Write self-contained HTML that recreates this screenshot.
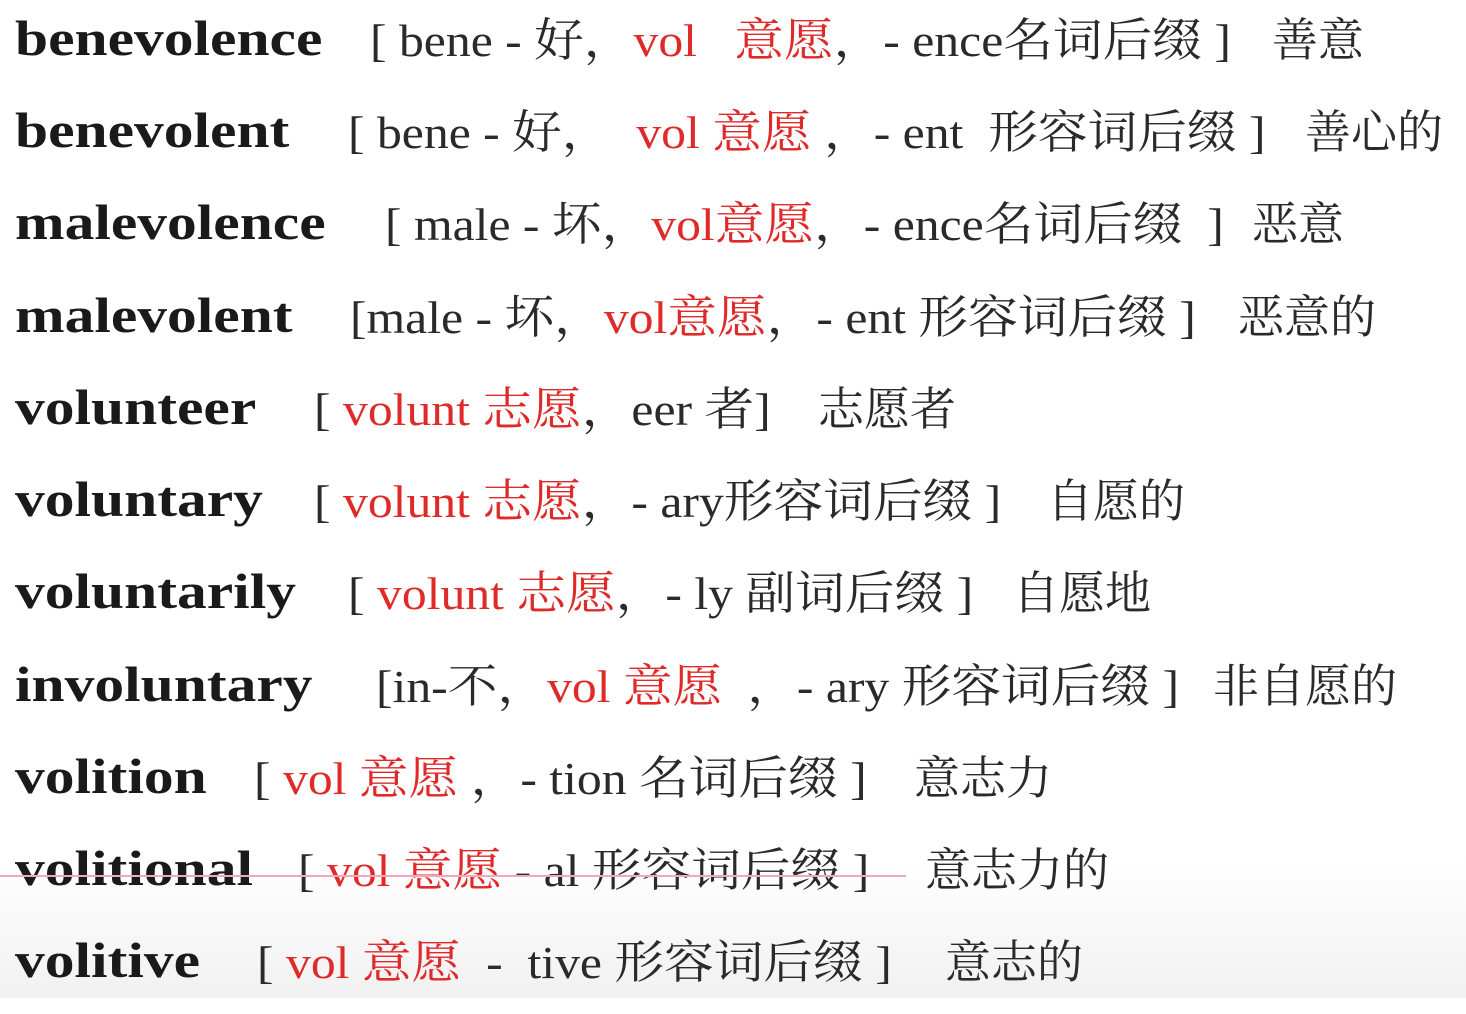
<!DOCTYPE html>
<html><head><meta charset="utf-8"><style>
html,body{margin:0;padding:0;}
body{width:1466px;height:998px;position:relative;overflow:hidden;background:linear-gradient(#fff 0,#fff 860px,#f1f1f1 998px);color:#222;}
.r{position:absolute;left:0;height:92px;width:1466px;}
.w{position:absolute;left:15px;top:9px;font:bold 50px "Liberation Serif","Noto Serif CJK SC",serif;color:#1a1a1a;white-space:pre;transform:scaleX(1.19);transform-origin:0 0;}
.b,.m{position:absolute;top:4px;font:46px "Liberation Serif","Noto Serif CJK SC",serif;white-space:pre;color:#2a2a2a;}
.b{transform:scaleX(1.08);transform-origin:0 0;}
.m{font-size:46px;}
.red{color:#df2a2a;}
.line{position:absolute;left:0;top:875px;width:906px;height:2px;background:#f2a8b8;}
</style></head><body>
<div class="r" style="top:0"><span class="w">benevolence</span><span class="b" style="left:370px">[ bene - 好，<span class="red">vol   意愿</span>，- ence名词后缀 ]</span><span class="m" style="left:1272px">善意</span></div>
<div class="r" style="top:92px"><span class="w">benevolent</span><span class="b" style="left:348px">[ bene - 好，  <span class="red">vol 意愿</span> ，- ent  形容词后缀 ]</span><span class="m" style="left:1305px">善心的</span></div>
<div class="r" style="top:184px"><span class="w">malevolence</span><span class="b" style="left:385px">[ male - 坏，<span class="red">vol意愿</span>，- ence名词后缀  ]</span><span class="m" style="left:1252px">恶意</span></div>
<div class="r" style="top:277px"><span class="w">malevolent</span><span class="b" style="left:350px">[male - 坏，<span class="red">vol意愿</span>，- ent 形容词后缀 ]</span><span class="m" style="left:1238px">恶意的</span></div>
<div class="r" style="top:369px"><span class="w">volunteer</span><span class="b" style="left:314px">[ <span class="red">volunt 志愿</span>，eer 者]</span><span class="m" style="left:818px">志愿者</span></div>
<div class="r" style="top:461px"><span class="w">voluntary</span><span class="b" style="left:314px">[ <span class="red">volunt 志愿</span>，- ary形容词后缀 ]</span><span class="m" style="left:1047px">自愿的</span></div>
<div class="r" style="top:553px"><span class="w">voluntarily</span><span class="b" style="left:348px">[ <span class="red">volunt 志愿</span>，- ly 副词后缀 ]</span><span class="m" style="left:1013px">自愿地</span></div>
<div class="r" style="top:646px"><span class="w">involuntary</span><span class="b" style="left:376px">[in-不，<span class="red">vol 意愿</span>  ，- ary 形容词后缀 ]</span><span class="m" style="left:1213px">非自愿的</span></div>
<div class="r" style="top:738px"><span class="w">volition</span><span class="b" style="left:254px">[ <span class="red">vol 意愿</span> ，- tion 名词后缀 ]</span><span class="m" style="left:914px">意志力</span></div>
<div class="r" style="top:830px"><span class="w">volitional</span><span class="b" style="left:298px">[ <span class="red">vol 意愿</span> - al 形容词后缀 ]</span><span class="m" style="left:925px">意志力的</span></div>
<div class="r" style="top:922px"><span class="w">volitive</span><span class="b" style="left:257px">[ <span class="red">vol 意愿</span>  -  tive 形容词后缀 ]</span><span class="m" style="left:945px">意志的</span></div>
<div class="line"></div>
</body></html>
